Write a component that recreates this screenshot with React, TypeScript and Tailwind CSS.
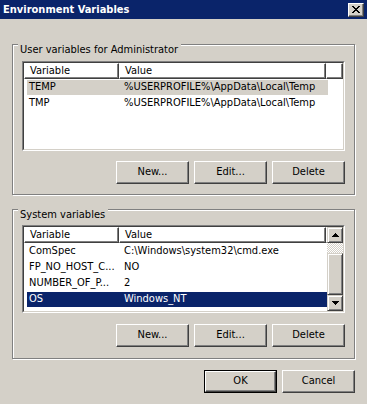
import React from "react";

const font = { fontFamily: 'Tahoma, "DejaVu Sans Condensed", "Liberation Sans", sans-serif' };

function Btn({ label, isDefault }: { label: string; isDefault?: boolean }) {
  if (isDefault) {
    return (
      <div className="w-[73px] h-[23px] border border-black">
        <div className="h-full border border-t-white border-l-white border-r-[#404040] border-b-[#404040] shadow-[inset_-1px_-1px_0_#808080] flex items-center justify-center text-black">
          {label}
        </div>
      </div>
    );
  }
  return (
    <div className="w-[73px] h-[23px] border border-t-white border-l-white border-r-[#404040] border-b-[#404040] shadow-[inset_-1px_-1px_0_#808080] flex items-center justify-center text-black">
      {label}
    </div>
  );
}

function HeaderCell({ w, label, grow }: { w?: string; label?: string; grow?: boolean }) {
  return (
    <div
      className={
        "h-full border border-t-white border-l-white border-r-[#404040] border-b-[#404040] shadow-[inset_-1px_-1px_0_#808080] flex items-center pl-[5px] " +
        (grow ? "flex-1 " : "shrink-0 ") +
        (w ?? "")
      }
    >
      {label}
    </div>
  );
}

type Row = { k: string; v: string; sel?: "focus" | "blur" };

function ListView({ rows, h, scroll }: { rows: Row[]; h: string; scroll?: boolean }) {
  return (
    <div className={"border border-t-[#808080] border-l-[#808080] border-b-white border-r-white " + h}>
      <div className="h-full border border-t-[#404040] border-l-[#404040] border-b-[#d4d0c8] border-r-[#d4d0c8] bg-white flex">
        <div className="flex-1 flex flex-col min-w-0">
          <div className="h-[16px] flex">
            <HeaderCell w="w-[95px]" label="Variable" />
            <HeaderCell w="w-[207px]" label="Value" />
            <HeaderCell grow />
          </div>
          {rows.map((r) => (
            <div key={r.k} className="h-[16px] flex items-center pl-[3px]">
              <div
                className={
                  "w-[301px] h-[15px] flex items-center " +
                  (r.sel === "focus"
                    ? "bg-[#0a246a] text-white"
                    : r.sel === "blur"
                    ? "bg-[#d4d0c8] text-black"
                    : "text-black")
                }
              >
                <div className="w-[95px] pl-[2px] shrink-0 whitespace-nowrap overflow-hidden">{r.k}</div>
                <div className="pl-[2px] whitespace-nowrap">{r.v}</div>
              </div>
            </div>
          ))}
        </div>
        {scroll && (
          <div className="w-[16px] h-full flex flex-col shrink-0">
            <div className="h-[16px] border border-t-[#d4d0c8] border-l-[#d4d0c8] border-r-[#404040] border-b-[#404040] shadow-[inset_1px_1px_0_#fff,inset_-1px_-1px_0_#808080] bg-[#d4d0c8] flex items-center justify-center">
              <svg width="7" height="4" viewBox="0 0 7 4">
                <path d="M3 0h1v1h1v1h1v1h1v1H0V3h1V2h1V1h1z" fill="#000" />
              </svg>
            </div>
            <div className="h-[10px] bg-[repeating-conic-gradient(#d4d0c8_0%_25%,#ffffff_0%_50%)] bg-[length:2px_2px]" />
            <div className="flex-1 border border-t-[#d4d0c8] border-l-[#d4d0c8] border-r-[#404040] border-b-[#404040] shadow-[inset_1px_1px_0_#fff,inset_-1px_-1px_0_#808080] bg-[#d4d0c8]" />
            <div className="h-[16px] border border-t-[#d4d0c8] border-l-[#d4d0c8] border-r-[#404040] border-b-[#404040] shadow-[inset_1px_1px_0_#fff,inset_-1px_-1px_0_#808080] bg-[#d4d0c8] flex items-center justify-center">
              <svg width="7" height="4" viewBox="0 0 7 4">
                <path d="M0 0h7v1H6v1H5v1H4v1H3V3H2V2H1V1H0z" fill="#000" />
              </svg>
            </div>
          </div>
        )}
      </div>
    </div>
  );
}

function GroupBox({ label, children, h }: { label: string; children: React.ReactNode; h: string }) {
  return (
    <div className={"border border-[#808080] shadow-[inset_1px_1px_0_#fff,1px_1px_0_#fff] flex flex-col " + h}>
      <div className="-mt-[2px] ml-[5px] self-start bg-[#d4d0c8] pl-[2px] pr-[3px] h-[13px] leading-[13px] text-black whitespace-nowrap">
        {label}
      </div>
      {children}
    </div>
  );
}

export default function App() {
  return (
    <div className="w-[367px] h-[404px] bg-[#d4d0c8] flex flex-col overflow-hidden text-[11px]" style={font}>
      <div className="h-[19px] bg-[#0a246a] flex items-center justify-between pl-[3px] pr-[3px] shrink-0">
        <span className="text-white font-bold text-[11px] leading-[13px]">Environment Variables</span>
        <div className="w-[16px] h-[14px] bg-[#d4d0c8] border border-t-white border-l-white border-r-[#404040] border-b-[#404040] shadow-[inset_-1px_-1px_0_#808080] flex items-center justify-center">
          <svg width="8" height="7" viewBox="0 0 8 7">
            <path d="M0 0h2v1h1v1h2V1h1V0h2v1H7v1H6v1H5v1h1v1h1v1h1v1H6V6H5V5H3v1H2v1H0V6h1V5h1V4h1V3H2V2H1V1H0z" fill="#000" />
          </svg>
        </div>
      </div>
      <div className="flex flex-col px-[12px]">
        <div className="mt-[25px]">
          <GroupBox label="User variables for Administrator" h="h-[151px]">
            <div className="mt-[5px] mx-[9px]">
              <ListView
                h="h-[90px]"
                rows={[
                  { k: "TEMP", v: "%USERPROFILE%\\AppData\\Local\\Temp", sel: "blur" },
                  { k: "TMP", v: "%USERPROFILE%\\AppData\\Local\\Temp" },
                ]}
              />
            </div>
            <div className="mt-[10px] mr-[9px] flex justify-end gap-[5px]">
              <Btn label="New..." />
              <Btn label="Edit..." />
              <Btn label="Delete" />
            </div>
          </GroupBox>
        </div>
        <div className="mt-[14px]">
          <GroupBox label="System variables" h="h-[150px]">
            <div className="mt-[4px] mx-[9px]">
              <ListView
                h="h-[88px]"
                scroll
                rows={[
                  { k: "ComSpec", v: "C:\\Windows\\system32\\cmd.exe" },
                  { k: "FP_NO_HOST_C...", v: "NO" },
                  { k: "NUMBER_OF_P...", v: "2" },
                  { k: "OS", v: "Windows_NT", sel: "focus" },
                ]}
              />
            </div>
            <div className="mt-[11px] mr-[9px] flex justify-end gap-[5px]">
              <Btn label="New..." />
              <Btn label="Edit..." />
              <Btn label="Delete" />
            </div>
          </GroupBox>
        </div>
        <div className="mt-[11px] flex justify-end gap-[5px]">
          <Btn label="OK" isDefault />
          <Btn label="Cancel" />
        </div>
      </div>
    </div>
  );
}
